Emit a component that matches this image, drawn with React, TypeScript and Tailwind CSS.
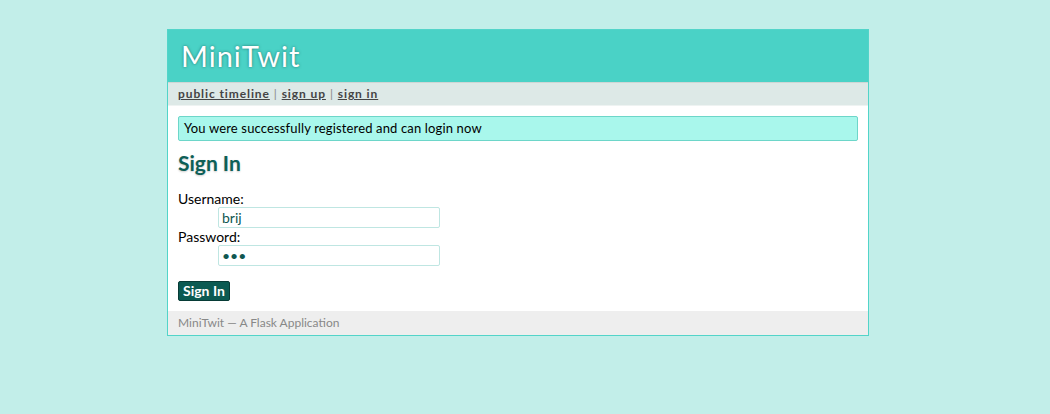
import React from "react";

const font = { fontFamily: "Lato, 'Liberation Sans', sans-serif" };

export default function App() {
  return (
    <div className="min-h-screen bg-[#c2eee9] pt-[29px]" style={font}>
      <div className="ml-[167px] w-[702px] border border-[#52d4c9] bg-white">
        <h1 className="bg-[#4ad2c6] px-[13px] py-[10px] text-[29px] leading-[32px] font-normal tracking-[1px] text-white [text-shadow:0_0_3px_#24776f]">
          MiniTwit
        </h1>
        <div className="border-t border-b border-t-[#cfd6d5] border-b-[#eef3f2] bg-[#dde9e7] px-[10px] pt-[3px] pb-[4px] text-[12px] leading-[15px] tracking-[0.9px] text-[#888]">
          <a href="#" className="font-bold text-[#444] underline">public timeline</a>
          {" | "}
          <a href="#" className="font-bold text-[#444] underline">sign up</a>
          {" | "}
          <a href="#" className="font-bold text-[#444] underline">sign in</a>
        </div>
        <div className="p-[10px]">
          <ul className="mb-[10px]">
            <li className="rounded-[2px] border border-[#6dd6c9] bg-[#a9f7ec] px-[5px] py-[4px] text-[13px] leading-[15px] tracking-[0.15px] text-black">
              You were successfully registered and can login now
            </li>
          </ul>
          <h2 className="mb-[15px] text-[21px] leading-[24px] font-bold text-[#0e5f57] [text-shadow:0_1px_2px_#ccc]">
            Sign In
          </h2>
          <form className="text-[14px] leading-[17px] text-black">
            <dl>
              <dt>Username:</dt>
              <dd className="ml-[40px]">
                <input
                  type="text"
                  defaultValue="brij"
                  className="block h-[21px] w-[222px] rounded-[2px] border border-[#bfe6e2] bg-white px-[3px] text-[14px] text-[#105751] outline-none"
                  style={font}
                />
              </dd>
              <dt>Password:</dt>
              <dd className="ml-[40px]">
                <input
                  type="password"
                  defaultValue="abc"
                  className="block h-[21px] w-[222px] rounded-[2px] border border-[#bfe6e2] bg-white px-[3px] text-[14px] text-[#105751] outline-none"
                  style={font}
                />
              </dd>
            </dl>
            <div className="mt-[15px] flex">
              <button
                type="button"
                className="h-[20px] rounded-[2px] border border-[#073b36] bg-[#0b5a52] px-[4px] text-[14px] leading-[16px] font-bold text-white"
                style={font}
              >
                Sign In
              </button>
            </div>
          </form>
        </div>
        <div className="bg-[#eeeeee] px-[10px] py-[5px] text-[12px] leading-[14px] text-[#888]">
          MiniTwit — A Flask Application
        </div>
      </div>
    </div>
  );
}
